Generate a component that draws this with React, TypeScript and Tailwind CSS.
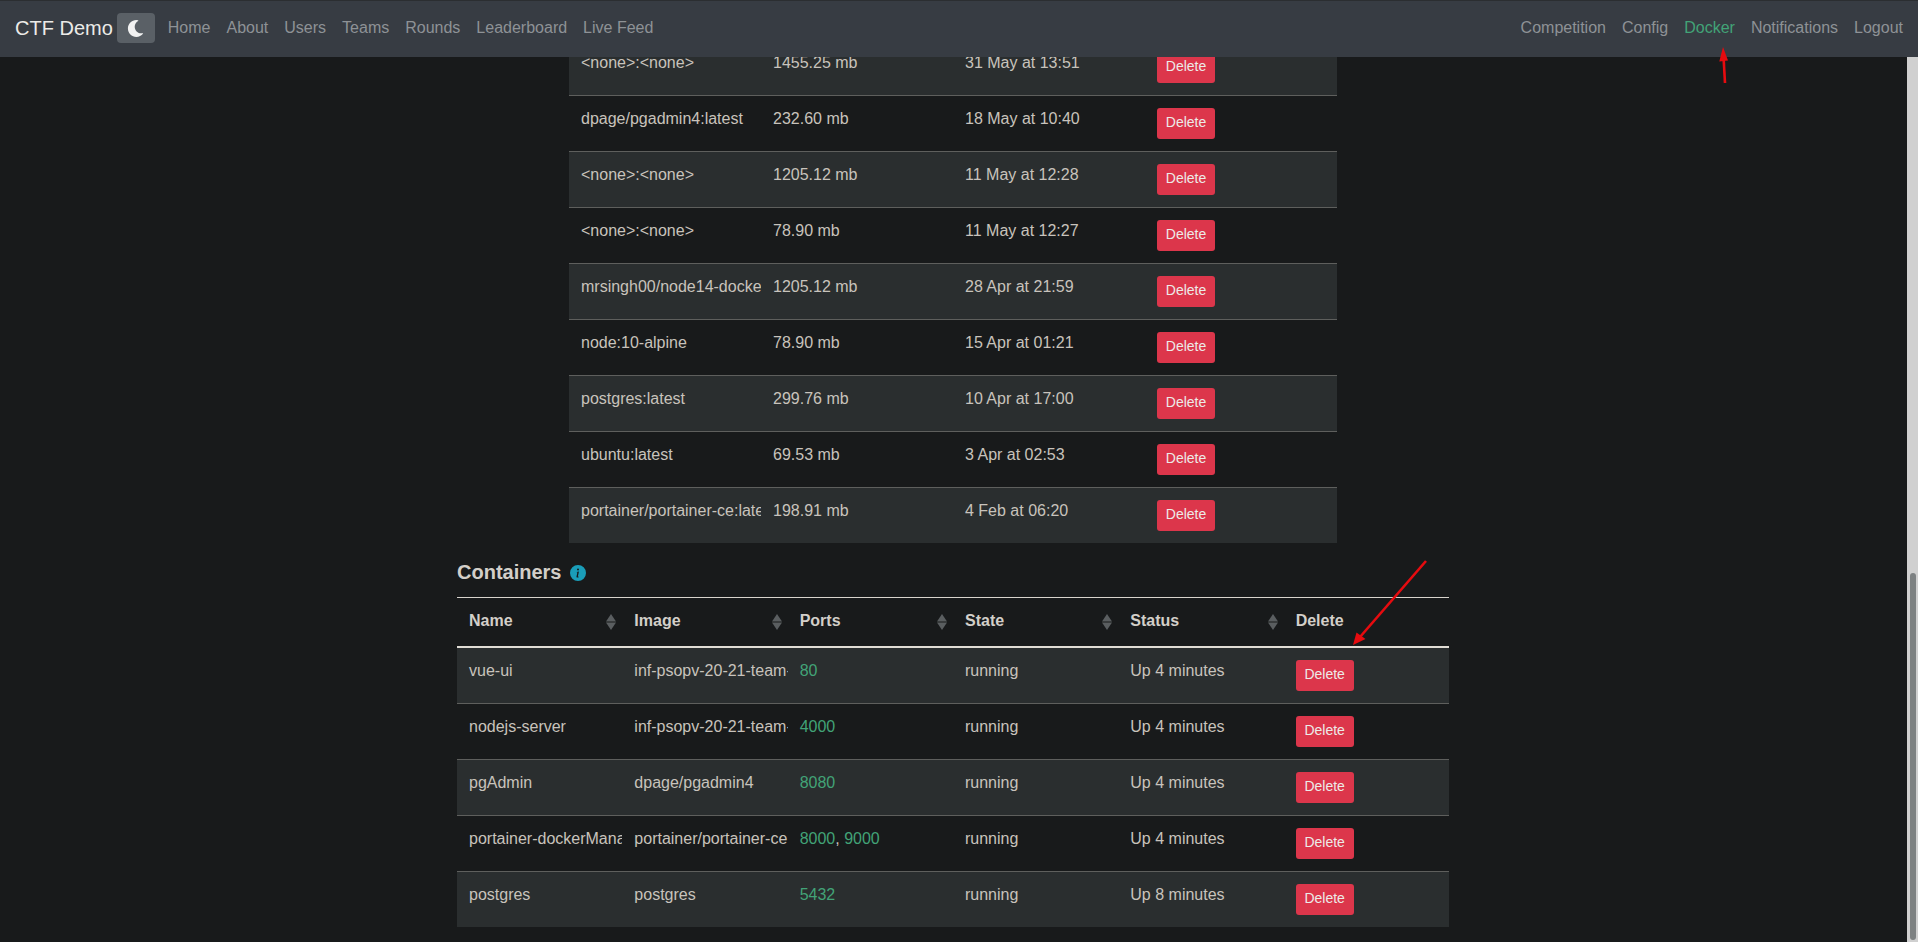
import { BsInfoCircleFill } from "react-icons/bs";
import { FaMoon } from "react-icons/fa";

const leftLinks = ["Home", "About", "Users", "Teams", "Rounds", "Leaderboard", "Live Feed"];
const rightLinks = ["Competition", "Config", "Docker", "Notifications", "Logout"];

const images = [
  ["<none>:<none>", "1455.25 mb", "31 May at 13:51"],
  ["dpage/pgadmin4:latest", "232.60 mb", "18 May at 10:40"],
  ["<none>:<none>", "1205.12 mb", "11 May at 12:28"],
  ["<none>:<none>", "78.90 mb", "11 May at 12:27"],
  ["mrsingh00/node14-docker:latest", "1205.12 mb", "28 Apr at 21:59"],
  ["node:10-alpine", "78.90 mb", "15 Apr at 01:21"],
  ["postgres:latest", "299.76 mb", "10 Apr at 17:00"],
  ["ubuntu:latest", "69.53 mb", "3 Apr at 02:53"],
  ["portainer/portainer-ce:latest", "198.91 mb", "4 Feb at 06:20"],
];

const containers = [
  { name: "vue-ui", image: "inf-psopv-20-21-team-project_vue-ui", ports: ["80"], status: "Up 4 minutes" },
  { name: "nodejs-server", image: "inf-psopv-20-21-team-project_nodejs", ports: ["4000"], status: "Up 4 minutes" },
  { name: "pgAdmin", image: "dpage/pgadmin4", ports: ["8080"], status: "Up 4 minutes" },
  { name: "portainer-dockerManager", image: "portainer/portainer-ce", ports: ["8000", "9000"], status: "Up 4 minutes" },
  { name: "postgres", image: "postgres", ports: ["5432"], status: "Up 8 minutes" },
];

const cell = "overflow-hidden whitespace-nowrap px-3 pb-[13px] pt-[11px] align-top";
const buttonCell = "px-3 py-3 align-top";

function DeleteButton() {
  return (
    <button className="block h-[31px] w-[58px] rounded-[3px] bg-[#dc364b] pb-[2px] text-center text-sm leading-[21px] text-[#ecebe8]">
      Delete
    </button>
  );
}

function SortIcon() {
  return (
    <svg width="10" height="16" viewBox="0 0 10 16" className="mr-[-6px] mt-[2px] shrink-0 fill-[#5a5e60]">
      <path d="M5 0 10 7.5H0Z" />
      <path d="M5 16 0 8.5H10Z" />
    </svg>
  );
}

function Th({ label, sortable = true }: { label: string; sortable?: boolean }) {
  return (
    <th className="border-t border-b-2 border-t-[#d8d4cd] border-b-[#e0dcd5] px-3 pb-[13px] pt-[11px] text-left align-top font-bold text-[#d3cfc9]">
      <div className="flex items-center justify-between">
        {label}
        {sortable && <SortIcon />}
      </div>
    </th>
  );
}

function Navbar() {
  return (
    <nav className="flex h-[57px] shrink-0 items-center justify-between border-t border-t-[#2b2e31] bg-[#373c43] pb-[2px] pl-[15px] pr-[7px] text-[#8e9296]">
      <div className="flex items-center">
        <span className="text-xl text-[#ecebe8]">CTF Demo</span>
        <button className="ml-[4px] flex h-[30px] w-[38px] items-center justify-center rounded-[4px] bg-[#5a6066] text-[#f2f2f2]">
          <FaMoon className="h-[17px] w-[17px]" />
        </button>
        <div className="ml-[5px] flex">
          {leftLinks.map((link) => (
            <a key={link} className="p-2">
              {link}
            </a>
          ))}
        </div>
      </div>
      <div className="flex">
        {rightLinks.map((link) => (
          <a key={link} className={link === "Docker" ? "p-2 text-[#42a377]" : "p-2"}>
            {link}
          </a>
        ))}
      </div>
    </nav>
  );
}

function ImagesTable() {
  return (
    <table className="mx-auto -mt-[18px] w-[768px] table-fixed border-separate border-spacing-0">
      <tbody>
        {images.map((row, i) => (
          <tr key={i} className={i % 2 === 0 ? "bg-[#2a2e2f]" : ""}>
            {row.map((value, j) => (
              <td key={j} className={`${cell} border-t border-t-[#5e5f5d]`}>
                {value}
              </td>
            ))}
            <td className={`${buttonCell} border-t border-t-[#5e5f5d]`}>
              <DeleteButton />
            </td>
          </tr>
        ))}
      </tbody>
    </table>
  );
}

function ContainersTable() {
  return (
    <table className="w-full table-fixed border-separate border-spacing-0">
      <thead>
        <tr>
          <Th label="Name" />
          <Th label="Image" />
          <Th label="Ports" />
          <Th label="State" />
          <Th label="Status" />
          <Th label="Delete" sortable={false} />
        </tr>
      </thead>
      <tbody>
        {containers.map((c, i) => {
          const border = i === 0 ? "" : "border-t border-t-[#5e5f5d]";
          return (
            <tr key={c.name} className={i % 2 === 0 ? "bg-[#2a2e2f]" : ""}>
              <td className={`${cell} ${border}`}>{c.name}</td>
              <td className={`${cell} ${border}`}>{c.image}</td>
              <td className={`${cell} ${border}`}>
                {c.ports.map((port, k) => (
                  <span key={port}>
                    {k > 0 && ", "}
                    <span className="text-[#42a377]">{port}</span>
                  </span>
                ))}
              </td>
              <td className={`${cell} ${border}`}>running</td>
              <td className={`${cell} ${border}`}>{c.status}</td>
              <td className={`${buttonCell} ${border}`}>
                <DeleteButton />
              </td>
            </tr>
          );
        })}
      </tbody>
    </table>
  );
}

function Annotations() {
  return (
    <svg width="1918" height="942" className="pointer-events-none absolute left-0 top-0">
      <g stroke="#e60b0f" strokeWidth="2.6">
        <line x1="1725" y1="83" x2="1723.6" y2="58" />
        <line x1="1426" y1="561" x2="1360" y2="637" />
      </g>
      <g fill="#e60b0f">
        <polygon points="1723,47 1728,60.5 1719.3,61.5" />
        <polygon points="1353,645 1356.5,632.5 1365.5,639" />
      </g>
    </svg>
  );
}

export default function App() {
  return (
    <div className="relative flex h-[942px] flex-col overflow-hidden bg-[#181a1b] font-['Liberation_Sans',sans-serif] text-base text-[#c8c3bc]">
      <Navbar />
      <div className="flex min-h-0 flex-1">
        <main className="min-w-0 flex-1 overflow-hidden pr-px">
          <ImagesTable />
          <section className="mx-auto w-[992px]">
            <h5 className="mb-[13px] mt-[17px] flex items-center text-xl font-bold leading-6 text-[#d3cfc9]">
              Containers
              <BsInfoCircleFill className="ml-[9px] mt-px h-4 w-4 text-[#1a9db8]" />
            </h5>
            <ContainersTable />
          </section>
        </main>
        <div className="w-[11px] shrink-0 bg-[#d0d0d0] pl-[3px] pt-[516px]">
          <div className="h-[367px] w-[6px] rounded-[3px] bg-[#7d8182]" />
        </div>
      </div>
      <Annotations />
    </div>
  );
}
